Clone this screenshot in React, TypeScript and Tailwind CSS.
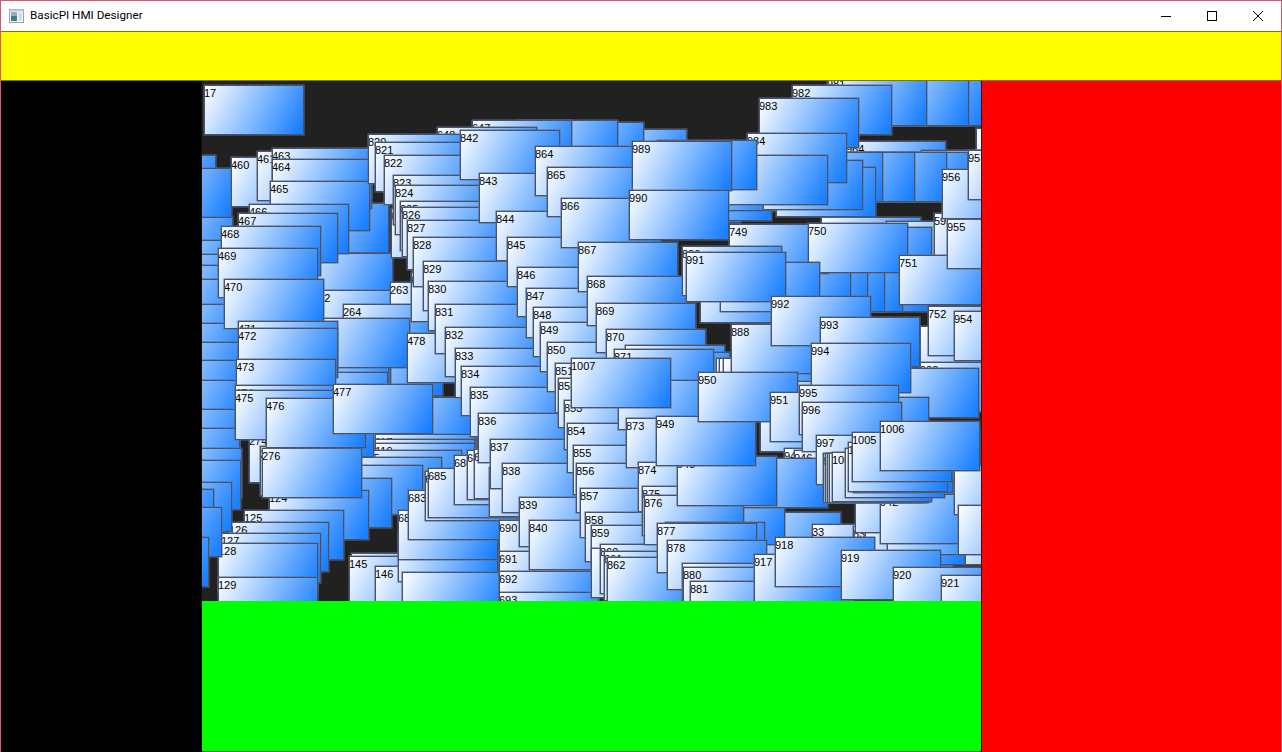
const CANVAS_X = 202;
const CANVAS_Y = 81;

type Card = [string, number, number];

const cards: Card[] = [
  ["17", 204, 85],
  ["", 377, 431], ["", 376, 419], ["", 372, 397], ["", 343, 346], ["", 291, 340], ["", 289, 356], ["", 288, 372],
  ["117", 375, 434], ["118", 375, 439], ["119", 375, 443], ["115", 362, 450],
  ["", 274, 407], ["", 342, 457], ["", 323, 465], ["", 292, 478],
  ["124", 269, 490], ["125", 244, 510], ["126", 229, 522], ["127", 221, 533], ["128", 218, 543], ["129", 218, 577],
  ["144", 351, 553], ["145", 349, 556], ["146", 375, 566],
  ["", 289, 203], ["", 293, 253], ["262", 312, 290], ["263", 390, 282], ["264", 343, 304], ["", 310, 318],
  ["274", 249, 433], ["275", 260, 446], ["276", 262, 448],
  ["", 116, 155], ["", 132, 168], ["", 133, 217], ["", 140, 240], ["", 140, 254], ["", 140, 265], ["", 140, 279],
  ["", 140, 304], ["", 140, 323], ["", 140, 342], ["", 140, 360], ["", 140, 380], ["", 140, 409], ["", 140, 428],
  ["", 142, 448], ["", 141, 460], ["", 132, 482], ["", 114, 489], ["", 122, 507], ["", 109, 537],
  ["460", 231, 157], ["461", 257, 151], ["463", 272, 148], ["464", 272, 159], ["465", 270, 181], ["466", 249, 204],
  ["467", 238, 213], ["468", 221, 226], ["469", 218, 248], ["470", 224, 279], ["471", 238, 321], ["472", 238, 328],
  ["473", 236, 359], ["474", 235, 385], ["475", 235, 390], ["476", 266, 398], ["477", 333, 384], ["478", 407, 333],
  ["", 587, 129], ["", 544, 122], ["", 518, 120], ["647", 472, 120], ["648", 437, 127],
  ["", 641, 173], ["", 672, 171], ["", 676, 161],
  ["668", 391, 208], ["669", 411, 272],
  ["", 398, 532], ["", 402, 572], ["682", 398, 510], ["683", 408, 490], ["684", 425, 471], ["685", 428, 468],
  ["686", 454, 455], ["687", 467, 450], ["688", 474, 449], ["689", 489, 467],
  ["690", 499, 520], ["691", 499, 551], ["692", 499, 571], ["693", 499, 592],
  ["", 885, 76], ["", 869, 76], ["981", 827, 76], ["", 976, 128],
  ["964", 846, 141], ["", 921, 150], ["", 868, 152], ["", 847, 152], ["", 815, 152], ["", 783, 152],
  ["", 821, 217], ["", 886, 221], ["", 832, 227], ["", 792, 236],
  ["", 828, 262], ["", 803, 262], ["", 785, 262], ["", 768, 262], ["", 751, 262],
  ["593", 934, 213], ["", 920, 326], ["938", 959, 362], ["938", 920, 362],
  ["749", 729, 224], ["750", 808, 223], ["751", 899, 255], ["752", 928, 306],
  ["", 879, 368], ["", 829, 397], ["", 880, 431],
  ["", 741, 512], ["33", 812, 524], ["", 685, 495], ["834", 853, 526], ["", 865, 515], ["", 855, 483], ["", 887, 505], ["", 965, 515],
  ["942", 880, 494], ["", 954, 465], ["", 958, 505],
  ["820", 368, 134], ["821", 375, 142], ["822", 384, 155], ["823", 393, 175], ["824", 395, 185], ["825", 400, 201],
  ["826", 402, 207], ["827", 407, 220], ["828", 413, 237], ["829", 423, 261], ["830", 428, 281], ["831", 435, 304],
  ["832", 445, 327], ["833", 455, 348], ["834", 461, 366], ["835", 470, 387], ["836", 478, 413], ["837", 490, 439],
  ["838", 502, 463], ["839", 519, 497], ["840", 529, 520],
  ["842", 460, 130], ["843", 479, 173], ["844", 496, 211], ["845", 507, 237], ["846", 517, 267], ["847", 526, 288],
  ["848", 533, 307], ["849", 540, 322], ["850", 547, 342], ["851", 555, 363], ["852", 558, 378], ["853", 564, 400],
  ["854", 567, 423], ["855", 573, 445], ["856", 576, 463], ["857", 580, 488], ["858", 585, 512], ["859", 591, 525],
  ["", 591, 548], ["860", 600, 544], ["861", 604, 551], ["862", 607, 557],
  ["864", 535, 146], ["865", 547, 167], ["866", 561, 198], ["867", 578, 242], ["868", 587, 276], ["869", 596, 303],
  ["870", 606, 329], ["", 625, 345], ["", 630, 352], ["871", 614, 349], ["872", 618, 380], ["", 716, 358], ["", 719, 358], ["", 723, 358],
  ["", 763, 381], ["", 760, 402], ["944", 784, 448], ["946", 794, 450], ["", 728, 458],
  ["873", 626, 418], ["874", 638, 462], ["875", 642, 486], ["876", 644, 495],
  ["", 665, 522], ["877", 657, 523], ["878", 667, 540], ["879", 682, 563], ["880", 683, 567], ["881", 690, 581],
  ["886", 682, 246], ["", 700, 273], ["", 720, 262], ["888", 731, 324],
  ["917", 754, 554], ["918", 775, 537], ["919", 841, 550], ["920", 893, 567], ["921", 941, 575],
  ["948", 677, 456], ["949", 656, 416], ["950", 698, 372], ["951", 770, 392],
  ["954", 954, 311], ["955", 947, 219], ["956", 942, 169], ["957", 968, 150],
  ["", 776, 167], ["", 763, 160],
  ["982", 792, 85], ["983", 759, 98], ["984", 747, 133], ["", 728, 155], ["", 657, 140],
  ["989", 632, 141], ["990", 629, 190], ["991", 686, 252], ["992", 771, 296], ["993", 820, 317], ["994", 811, 343],
  ["995", 799, 385], ["996", 802, 402], ["997", 816, 435],
  ["998", 823, 453], ["", 825, 453], ["", 827, 453], ["", 829, 453], ["1000", 832, 452],
  ["", 845, 448], ["", 853, 443], ["1004", 848, 442], ["1005", 852, 432], ["1006", 880, 421], ["1007", 571, 358],
];

function AppIcon() {
  return (
    <svg width="15" height="14" viewBox="0 0 15 14" className="shrink-0">
      <rect x="0.5" y="0.5" width="14" height="13" fill="#f4f6f8" stroke="#9aa3ad" />
      <rect x="0.5" y="0.5" width="14" height="2" fill="#c8ced6" />
      <rect x="2" y="3" width="6" height="9" fill="#3f7f86" />
      <rect x="2" y="3" width="6" height="4" fill="#8fb3bd" />
      <rect x="9.5" y="3.5" width="3.5" height="8" fill="#d6dae0" />
    </svg>
  );
}

function WindowControls() {
  return (
    <div className="flex items-center">
      <div className="flex h-[30px] w-[46px] items-center justify-center">
        <svg width="10" height="10" viewBox="0 0 10 10"><path d="M0 5.5H10" stroke="#000" strokeWidth="1" /></svg>
      </div>
      <div className="flex h-[30px] w-[46px] items-center justify-center">
        <svg width="10" height="10" viewBox="0 0 10 10"><rect x="0.5" y="0.5" width="9" height="9" fill="none" stroke="#000" /></svg>
      </div>
      <div className="flex h-[30px] w-[46px] items-center justify-center">
        <svg width="10" height="10" viewBox="0 0 10 10"><path d="M0 0L10 10M10 0L0 10" stroke="#000" strokeWidth="1" /></svg>
      </div>
    </div>
  );
}

export default function App() {
  return (
    <div className="flex h-[752px] w-[1282px] flex-col overflow-hidden border border-b-0 border-[#d9566b] bg-white font-['Roboto',sans-serif]">
      <div className="flex h-[30px] shrink-0 items-center justify-between bg-white pl-[8px]">
        <div className="flex items-center gap-[6px]">
          <AppIcon />
          <span className="text-[11.7px] text-black">BasicPI HMI Designer</span>
        </div>
        <WindowControls />
      </div>
      <div className="h-[50px] shrink-0 border-y border-[#7a7a00] bg-[#ffff00]" />
      <div className="flex min-h-0 flex-1">
        <div className="w-[200px] shrink-0 bg-black" />
        <div className="flex w-[780px] shrink-0 flex-col border-l border-[#0d0d0d]">
          <div className="relative h-[520px] shrink-0 overflow-hidden bg-[#212121] font-['Liberation_Sans',sans-serif]">
            {cards.map(([label, x, y], i) => (
              <div
                key={i}
                className="absolute h-[50px] w-[100px] overflow-hidden border border-[#47536a] bg-[linear-gradient(116.6deg,#ffffff,#1a7fff_96%)] indent-[-1px] text-[11px] leading-[14px] text-black shadow-[0_0_0_0.5px_#5c6a80]"
                style={{ left: x - CANVAS_X, top: y - CANVAS_Y }}
              >
                {label}
              </div>
            ))}
          </div>
          <div className="flex-1 border-b border-[#0a5a0a] bg-[#00ff00]" />
        </div>
        <div className="flex-1 border-l border-[#5a0000] bg-[#ff0000]" />
      </div>
    </div>
  );
}
